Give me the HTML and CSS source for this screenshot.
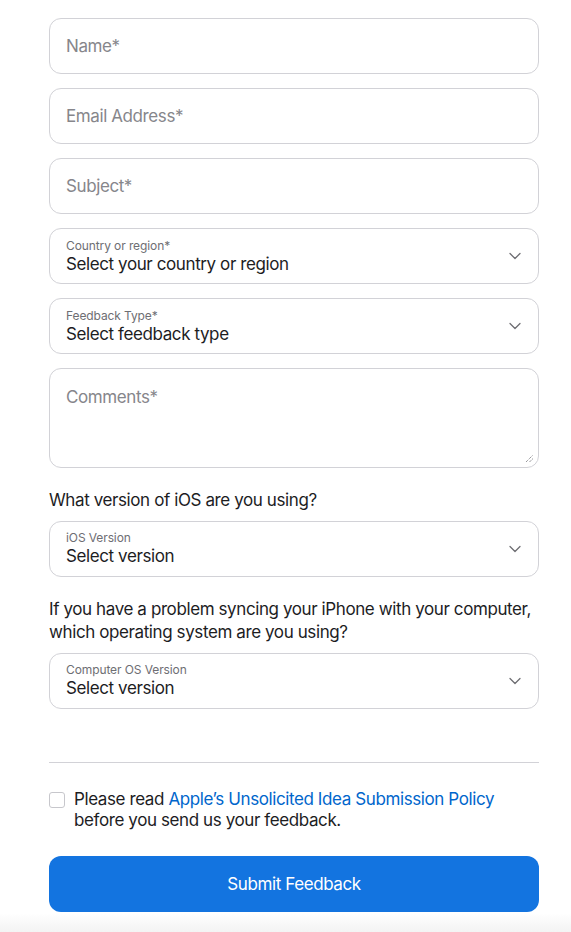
FILE: index.html
```html
<!DOCTYPE html>
<html lang="en">
<head>
<meta charset="UTF-8">
<meta name="viewport" content="width=device-width, initial-scale=1.0">
<title>Feedback</title>
<link rel="stylesheet" href="styles.css">
</head>
<body>
<form class="form">
    <div class="field"><span class="ph">Name*</span></div>
    <div class="field"><span class="ph">Email Address*</span></div>
    <div class="field"><span class="ph">Subject*</span></div>
    <div class="field select">
        <span class="label">Country or region*</span>
        <span class="value">Select your country or region</span>
        <svg class="chev" width="12" height="8" viewBox="0 0 12 8"><path d="M1 1.5l5 5 5-5" fill="none" stroke="#6e6e73" stroke-width="1.3" stroke-linecap="round" stroke-linejoin="round"/></svg>
    </div>
    <div class="field select">
        <span class="label">Feedback Type*</span>
        <span class="value">Select feedback type</span>
        <svg class="chev" width="12" height="8" viewBox="0 0 12 8"><path d="M1 1.5l5 5 5-5" fill="none" stroke="#6e6e73" stroke-width="1.3" stroke-linecap="round" stroke-linejoin="round"/></svg>
    </div>
    <div class="field area">
        <span class="ph">Comments*</span>
        <svg class="grip" width="9" height="9" viewBox="0 0 9 9"><path d="M1 8L8 1M4.5 8L8 4.5" stroke="#6e6e73" stroke-width="1" stroke-dasharray="1 1"/></svg>
    </div>
    <p class="question">What version of iOS are you using?</p>
    <div class="field select">
        <span class="label">iOS Version</span>
        <span class="value">Select version</span>
        <svg class="chev" width="12" height="8" viewBox="0 0 12 8"><path d="M1 1.5l5 5 5-5" fill="none" stroke="#6e6e73" stroke-width="1.3" stroke-linecap="round" stroke-linejoin="round"/></svg>
    </div>
    <p class="question">If you have a problem syncing your iPhone with your computer, which operating system are you using?</p>
    <div class="field select">
        <span class="label">Computer OS Version</span>
        <span class="value">Select version</span>
        <svg class="chev" width="12" height="8" viewBox="0 0 12 8"><path d="M1 1.5l5 5 5-5" fill="none" stroke="#6e6e73" stroke-width="1.3" stroke-linecap="round" stroke-linejoin="round"/></svg>
    </div>
    <hr class="divider">
    <div class="agree">
        <span class="box"></span>
        <p>Please read <a href="#">Apple’s Unsolicited Idea Submission Policy</a><br>before you send us your feedback.</p>
    </div>
    <button type="button" class="submit">Submit Feedback</button>
</form>
<div class="fade"></div>
</body>
</html>
```
FILE: styles.css
```css
*{margin:0;padding:0;box-sizing:border-box;}
body
{
    font-family: Inter, "Noto Sans", "Liberation Sans", sans-serif;
    color: #1d1d1f;
    background: #fff;
    font-size: 17px;
    letter-spacing: -0.4px;
}
.form
{
    width: 490px;
    margin-left: 49px;
    padding-top: 18px;
    display: flex;
    flex-direction: column;
}
.field
{
    position: relative;
    height: 56px;
    border: 1px solid #d2d2d7;
    border-radius: 12px;
    margin-bottom: 14px;
    padding: 0 16px;
    display: flex;
    flex-direction: column;
    justify-content: center;
}
.ph
{
    color: #86868b;
}
.label
{
    font-size: 12px;
    line-height: 15px;
    color: #6e6e73;
    letter-spacing: -0.1px;
}
.value
{
    line-height: 22px;
}
.chev
{
    position: absolute;
    right: 17px;
    top: 23px;
}
.area
{
    height: 100px;
    justify-content: flex-start;
    padding-top: 18px;
}
.grip
{
    position: absolute;
    right: 4px;
    bottom: 4px;
}
.question
{
    line-height: 23.5px;
    margin-top: 7px;
    margin-bottom: 8px;
}
.divider
{
    border: none;
    border-top: 1px solid #d2d2d7;
    margin-top: 39px;
    margin-bottom: 26px;
}
.agree
{
    display: flex;
    gap: 9px;
    line-height: 21px;
    margin-bottom: 25px;
}
.box
{
    flex: none;
    width: 16px;
    height: 16px;
    margin-top: 3px;
    border: 1px solid #c7c7cc;
    border-radius: 3px;
}
.agree a
{
    color: #0066cc;
    text-decoration: none;
}
.submit
{
    height: 56px;
    border: none;
    border-radius: 12px;
    background: #1374e0;
    color: #fff;
    font-family: inherit;
    font-size: 17px;
    letter-spacing: -0.4px;
}
.fade
{
    height: 21px;
    margin-top: 1px;
    background: linear-gradient(#fff, #f2f2f2);
}
```
